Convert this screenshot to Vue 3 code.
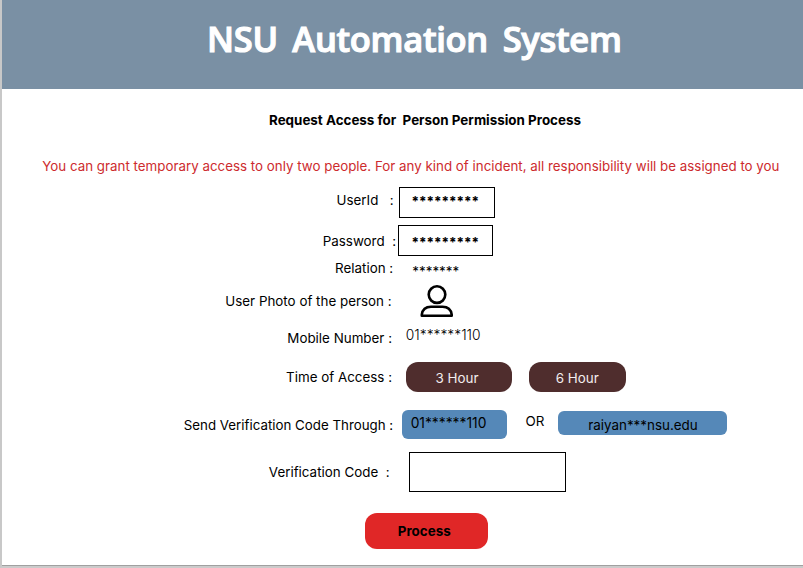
<script setup>
const mask = '*********'
</script>

<template>
  <div class="frame">
    <header class="banner"><h1>NSU Automation System</h1></header>
    <main>
      <h2>Request Access for&nbsp; Person Permission Process</h2>
      <p class="notice">You can grant temporary access to only two people. For any kind of incident, all responsibility will be assigned to you</p>

      <div class="row row-user">
        <span class="label">UserId&nbsp;&nbsp; :</span>
        <div class="field">{{ mask }}</div>
      </div>
      <div class="row row-pass">
        <span class="label">Password&nbsp; :</span>
        <div class="field">{{ mask }}</div>
      </div>
      <div class="row row-relation">
        <span class="label">Relation :</span>
        <span class="value">*******</span>
      </div>
      <div class="row row-photo">
        <span class="label">User Photo of the person :</span>
        <svg class="person" width="34" height="34" viewBox="0 0 34 34" fill="none" stroke="#000" stroke-width="2.6">
          <circle cx="17" cy="9.6" r="8.3" />
          <path d="M1.8 30.8V29.6Q2.9 21.8 11 21.8H22.5Q30.6 21.8 31.7 29.6V30.8Z" stroke-linejoin="round" />
        </svg>
      </div>
      <div class="row row-mobile">
        <span class="label">Mobile Number :</span>
        <span class="value">01******110</span>
      </div>
      <div class="row row-time">
        <span class="label">Time of Access :</span>
        <button class="hour three">3 Hour</button>
        <button class="hour six">6 Hour</button>
      </div>
      <div class="row row-send">
        <span class="label">Send Verification Code Through :</span>
        <button class="channel phone">01******110</button>
        <span class="or">OR</span>
        <button class="channel mail">raiyan***nsu.edu</button>
      </div>
      <div class="row row-code">
        <span class="label">Verification Code&nbsp; :</span>
        <input class="code" type="text" aria-label="Verification Code" />
      </div>
      <button class="process">Process</button>
    </main>
  </div>
</template>

<style>
body { margin: 0; background: #fff; }
</style>

<style scoped>
* { box-sizing: border-box; }
.frame {
  width: 803px;
  height: 568px;
  overflow: hidden;
  display: flex;
  flex-direction: column;
  border-left: 2px solid #c8c8c8;
  border-bottom: 2px solid #cbcbcb;
  font: 400 13.4px/16px Inter, "Liberation Sans", sans-serif;
  color: #000;
  white-space: nowrap;
}
.banner {
  height: 89px;
  flex: none;
  padding: 15px 0 0 205px;
  background: #7a90a4;
}
h1 {
  margin: 0;
  font: 600 34.5px/48px "Open Sans", "Noto Sans", sans-serif;
  letter-spacing: -0.3px;
  word-spacing: 6px;
  color: #fff;
  -webkit-text-stroke: 1.1px #fff;
}
main {
  flex: 1;
  background: #fff;
  border-bottom: 1px solid #a0a0a0;
}
h2 {
  margin: 0;
  padding: 23px 0 0 267px;
  height: 62px;
  font-size: 13.4px;
  line-height: 16px;
  font-weight: 700;
}
.notice {
  margin: 0;
  padding: 7px 0 0 40.3px;
  height: 31px;
  font-size: 13.35px;
  color: #cd2b2e;
}
.row { display: flex; align-items: flex-start; }
.label { flex: none; text-align: right; font-size: 13.38px; }
button, input {
  flex: none;
  border: 0;
  margin: 0;
  padding: 0;
  font: inherit;
  color: inherit;
}
.field {
  height: 31px;
  border: 1px solid #000;
  font-weight: 700;
}
.row-user { height: 43px; padding-top: 5px; }
.row-user .label { width: 391.5px; margin-top: 5px; }
.row-user .field { width: 96px; margin-left: 5.5px; padding: 5px 0 0 11.5px; }
.row-pass { height: 31px; }
.row-pass .label { width: 394px; margin-top: 8px; }
.row-pass .field { width: 95px; margin-left: 2px; padding: 8px 0 0 12.5px; }
.row-relation { height: 29px; }
.row-relation .label { width: 391.2px; margin-top: 4px; }
.row-relation .value { margin: 7px 0 0 19.1px; }
.row-photo { height: 37px; }
.row-photo .label { width: 389.6px; margin-top: 8px; }
.person { margin-left: 28.9px; }
.row-mobile { height: 40px; }
.row-mobile .label { width: 390px; margin-top: 8px; }
.row-mobile .value { margin: 5px 0 0 13.8px; font-size: 13.8px; font-weight: 300; }
.row-time { height: 48px; }
.row-time .label { width: 390px; margin-top: 7px; }
.hour {
  height: 30px;
  border-radius: 12px;
  background: #4f2d2d;
  color: #f4eeee;
}
.three { width: 106.6px; margin-left: 13.7px; padding: 2px 4px 0 0; }
.six { width: 96.6px; margin-left: 16.7px; padding-top: 1px; }
.row-send { height: 42px; }
.row-send .label { width: 391.2px; margin-top: 7px; font-size: 13.32px; }
.channel { border-radius: 6px; background: #5588b8; }
.phone { width: 105px; height: 29px; margin-left: 9.3px; padding: 0 13px 3px 0; font-size: 13.8px; }
.or { width: 19px; margin: 3px 13.4px 0 18.1px; }
.mail { width: 169px; height: 24px; margin-top: 1px; padding: 3px 0 0 1px; }
.row-code { height: 61px; }
.row-code .label { width: 387.6px; margin-top: 12px; }
.code { width: 157px; height: 40px; margin-left: 19.4px; border: 1px solid #000; background: #fff; }
.process {
  display: block;
  width: 123.5px;
  height: 36px;
  margin: 0 0 0 362.5px;
  padding-right: 4px;
  border-radius: 12px;
  background: #e02727;
  font-weight: 700;
}
</style>
